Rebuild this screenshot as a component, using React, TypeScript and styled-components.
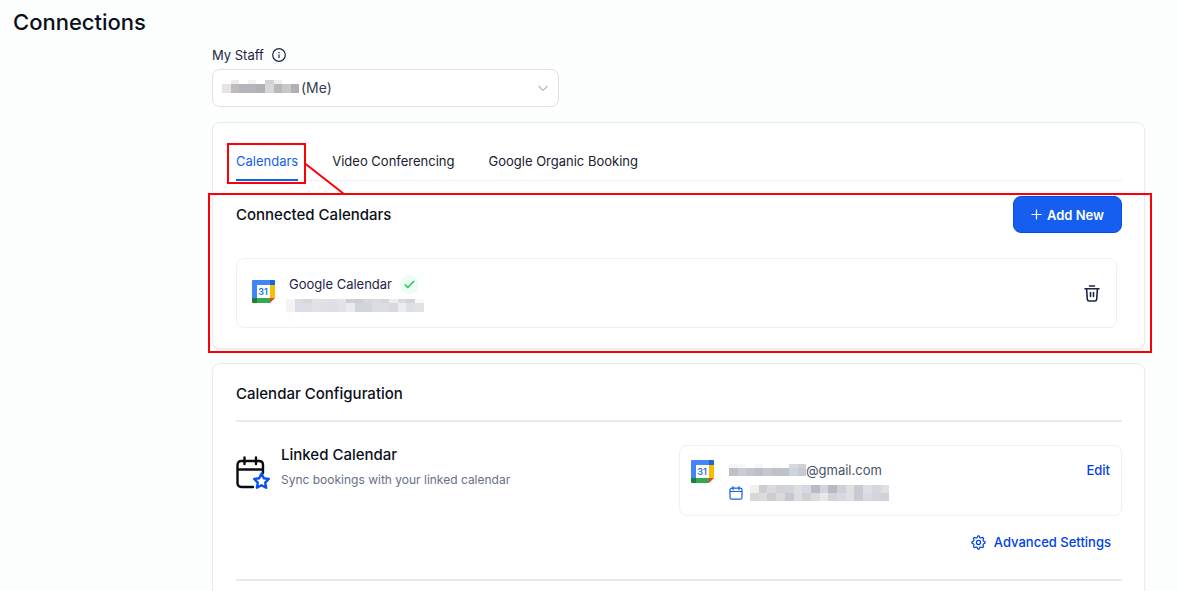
import React from "react";
import styled, { createGlobalStyle } from "styled-components";

const Global = createGlobalStyle`
  * { box-sizing: border-box; }
  body {
    margin: 0;
    background: #fcfdfd;
    color: #101828;
    font-family: Inter, "Liberation Sans", sans-serif;
    font-size: 14px;
    line-height: 20px;
  }
  h1, h2, h3, p { margin: 0; }
  svg { display: block; flex: none; }
`;

const Page = styled.div`
  overflow-x: hidden;
`;

const PageTitle = styled.h1`
  padding: 8px 13px 0;
  font-size: 22px;
  line-height: 28px;
  font-weight: 500;
  color: #0b0f1a;
`;

const Content = styled.main`
  margin: 8px 32px 0 212px;
  display: flex;
  flex-direction: column;
`;

const StaffLabel = styled.label`
  display: flex;
  align-items: center;
  gap: 8px;
  line-height: 22px;
  font-size: 13px;
  color: #1d2647;
`;

const SelectWrap = styled.div`
  position: relative;
  width: 100%;
  max-width: 347px;
  margin: 3px 0 15px;
`;

const Select = styled.select`
  appearance: none;
  display: block;
  width: 100%;
  height: 38px;
  padding: 0 40px 0 88px;
  border: 1px solid #dfe1e8;
  border-radius: 8px;
  background: #fff;
  color: #344054;
  font: inherit;
`;

const SelectMask = styled.span`
  position: absolute;
  left: 10px;
  top: 11px;
  pointer-events: none;
`;

const SelectChevron = styled.span`
  position: absolute;
  right: 10px;
  top: 13px;
  pointer-events: none;
  color: #b5b9c1;
`;

const Card = styled.section`
  position: relative;
  padding: 0 22px 0 23px;
  border: 1px solid #e9ebf1;
  border-radius: 8px;
  background: #fff;
  box-shadow: 0 1px 2px rgba(16, 24, 40, 0.06);
`;

const CalendarsCard = styled(Card)`
  padding-top: 24px;
  padding-bottom: 20px;
  margin-bottom: 14px;
`;

const Tabs = styled.div`
  display: flex;
  gap: 34px;
  border-bottom: 1px solid #eef0f6;
`;

const Tab = styled.button<{ $active?: boolean }>`
  height: 34px;
  margin-bottom: -1px;
  padding: 0 0 4px;
  border: 0;
  border-bottom: 2px solid ${(p) => (p.$active ? "#155eef" : "transparent")};
  background: none;
  color: ${(p) => (p.$active ? "#155eef" : "#1a2030")};
  font: inherit;
  font-size: 13px;
`;

const PanelHead = styled.div`
  display: flex;
  justify-content: space-between;
  align-items: center;
  margin-top: 15px;
`;

const Heading = styled.h2`
  font-size: 15px;
  line-height: 20px;
  font-weight: 500;
  color: #0b0f1a;
`;

const PrimaryButton = styled.button`
  display: flex;
  align-items: center;
  gap: 5px;
  height: 37px;
  padding: 0 17px;
  border: 1px solid #004eeb;
  border-radius: 8px;
  background: #155eef;
  color: #fff;
  font: inherit;
  font-size: 13px;
  font-weight: 600;
`;

const AccountRow = styled.div`
  display: flex;
  align-items: center;
  margin: 25px 5px 0 0;
  padding: 0 16px 0 15px;
  height: 70px;
  border: 1px solid #eff0f4;
  border-radius: 8px;
`;

const AccountLogo = styled.span`
  padding-bottom: 4px;
`;

const AccountInfo = styled.div`
  flex: 1;
  display: flex;
  flex-direction: column;
  gap: 5px;
  margin-left: 11px;
`;

const AccountName = styled.div`
  display: flex;
  align-items: center;
  gap: 8px;
  margin-left: 3px;
  font-size: 13px;
  color: #1d2647;
`;

const CheckBadge = styled.span`
  display: grid;
  place-items: center;
  width: 19px;
  height: 19px;
  border-radius: 50%;
  background: #ecfdf3;
`;

const IconButton = styled.button`
  padding: 0;
  border: 0;
  background: none;
  color: #1d2647;
`;

const ConfigCard = styled(Card)`
  padding-top: 20px;
  padding-bottom: 20px;
`;

const ConfigTitle = styled(Heading)`
  margin-bottom: 16px;
`;

const Divider = styled.hr`
  height: 2px;
  margin: 0;
  border: 0;
  background: #e9eaee;
`;

const ConfigRow = styled.div`
  display: flex;
  align-items: flex-start;
  margin: 23px 0 16px;
`;

const ConfigText = styled.div`
  flex: 1;
  display: flex;
  gap: 11px;
  align-items: flex-end;
`;

const Description = styled.p`
  margin-top: 5px;
  font-size: 12px;
  line-height: 20px;
  color: #667085;
`;

const LinkedBox = styled.div`
  display: flex;
  width: 50%;
  height: 71px;
  padding: 14px 11px;
  gap: 15px;
  border: 1px solid #eff0f4;
  border-radius: 8px;
`;

const LinkedInfo = styled.div`
  flex: 1;
  display: flex;
  flex-direction: column;
  gap: 5px;
`;

const Line = styled.div<{ $gap?: number }>`
  display: flex;
  align-items: center;
  gap: ${(p) => p.$gap ?? 0}px;
  font-size: 13px;
  color: #475467;
`;

const TextLink = styled.a`
  display: inline-flex;
  align-items: center;
  gap: 8px;
  height: 20px;
  color: #0040e8;
  font-size: 13px;
  font-weight: 500;
  text-decoration: none;
`;

const Actions = styled.div`
  display: flex;
  justify-content: flex-end;
  padding-right: 11px;
  margin-bottom: 27px;
`;

const PanelMarker = styled.div`
  position: absolute;
  inset: 70px -8px -5px -5px;
  border: 2px solid #fb0007;
  pointer-events: none;
`;

const TabMarker = styled.div`
  position: absolute;
  left: 14px;
  top: 20px;
  width: 79px;
  height: 41px;
  border: 2px solid #fb0007;
  pointer-events: none;
`;

const MarkerLine = styled.svg`
  position: absolute;
  left: 92px;
  top: 40px;
  pointer-events: none;
`;

interface MosaicProps {
  rows: string[][];
  cell: number;
  heights: number[];
  label: string;
}

function Mosaic({ rows, cell, heights, label }: MosaicProps) {
  const width = Math.round(Math.max(...rows.map((r) => r.length)) * cell);
  const height = heights.reduce((a, b) => a + b, 0);
  const tops = heights.map((_, i) => heights.slice(0, i).reduce((a, b) => a + b, 0));
  return (
    <svg width={width} height={height} role="img" aria-label={label} shapeRendering="crispEdges">
      {rows.map((row, r) =>
        row.map((c, i) => (
          <rect key={`${r}-${i}`} x={i * cell} y={tops[r]} width={cell + 0.5} height={heights[r]} fill={`#${c}`} />
        )),
      )}
    </svg>
  );
}

const nameMask = [
  "fff ececec fff f2f2f3 fff d3d1d3 eeeeef fff fff".split(" "),
  "e9e3e3 bdbdbf b5b4bb b3b5bb b0b1b5 d5d7da bcb6ba c6c8ca b3aeb1".split(" "),
];
const accountMask = [
  "f6f3f4 dcdce1 d6d6dc e3e3e7 e1e1e5 dfe0e6 e3e4e9 cfced5 cdced5 d6d7dd dadbe0 d6d5db eaecf0 d9dae0 d2d3d8 f6f8fd".split(" "),
  "f6f2f2 dbdde4 dddee4 e1e1e4 e0e0e4 dddfe5 e1e1e6 eaebed d2d4dc d3d5dd dadde4 dcdce2 d9d8de ebedef dcdfe5 e2e2e4".split(" "),
];
const emailMask = [
  "f5f6f8 f8f8f8 fff f7f7f7 fff fbfbfb fff d5d9e1 cdd0d7".split(" "),
  "bfc0c6 cbcdd4 c2c5cd bcbfc8 c5c7ce bfc1c8 c0c2c9 cdd3dc c7c9d0".split(" "),
];
const calendarMask = [
  "f2f0ef cdced1 dad9db d1d1d6 d0d4dc dededf d5d8df b9bbc2 d3d4d9 b6b9c1 cfd1d7 dedfdf c9cad1 dcdee3 d5d7de dedfe0".split(" "),
  "d8d7d8 dbdbde cfcdd1 d9d9dd c6c8cf dcdcdf cfcfd4 dbdbdf e8e8e9 d3d4da d8d9de dedfe0 c9cbd2 d8d9de d3d5dc d0d2d9".split(" "),
];

function GoogleCalendarIcon() {
  return (
    <svg width="23" height="23" viewBox="0 0 23 23" aria-hidden="true">
      <path d="M0 1a1 1 0 0 1 1-1h17v5H5v13H0z" fill="#4285f4" />
      <path d="M18 0h4a1 1 0 0 1 1 1v4h-5z" fill="#1967d2" />
      <path d="M18 5h5v13h-5z" fill="#fbbc04" />
      <path d="M5 18h13v5H5z" fill="#34a853" />
      <path d="M0 18h5v5H1a1 1 0 0 1-1-1z" fill="#188038" />
      <path d="M18 18h5l-5 5z" fill="#ea4335" />
      <path d="M5 5h13v13H5z" fill="#fff" />
      <text x="11" y="15" textAnchor="middle" fontFamily="Inter, sans-serif" fontSize="9" fontWeight="600" fill="#1a73e8">
        31
      </text>
    </svg>
  );
}

function CalendarStarIcon() {
  return (
    <svg width="34" height="34" viewBox="0 0 34 34" fill="none" strokeLinecap="round" strokeLinejoin="round" aria-hidden="true">
      <path
        d="M17 31H5.500Q1.500 31 1.500 27V9Q1.500 5 5.500 5H23Q27 5 27 9V17M1.500 13.500H27M8.500 1.500V8M20 1.500V8"
        stroke="#090b10"
        strokeWidth="2.400"
      />
      <path
        d="m25.500 17.500 2.300 4.800 5 .7-3.600 3.600.9 5.200-4.600-2.500-4.600 2.500.9-5.200-3.600-3.600 5-.7z"
        stroke="#0b50f2"
        strokeWidth="2.400"
        fill="#fff"
      />
    </svg>
  );
}

function GearIcon() {
  const points = Array.from({ length: 32 }, (_, i) => {
    const a = ((i - 0.5) * Math.PI) / 16;
    const r = i % 4 < 2 ? 7 : 5.4;
    return `${8 + r * Math.sin(a)},${8 - r * Math.cos(a)}`;
  }).join(" ");
  return (
    <svg width="15" height="15" viewBox="0 0 16 16" fill="none" stroke="currentColor" strokeWidth="1.300" strokeLinejoin="round" aria-hidden="true">
      <polygon points={points} />
      <circle cx="8" cy="8" r="2.200" />
    </svg>
  );
}

export default function App() {
  return (
    <Page>
      <Global />
      <PageTitle>Connections</PageTitle>
      <Content>
        <StaffLabel htmlFor="staff">
          My Staff
          <svg width="14" height="14" viewBox="0 0 14 14" fill="none" stroke="currentColor" strokeWidth="1.200" aria-hidden="true">
            <circle cx="7" cy="7" r="6.300" />
            <path d="M7 6.500V10M7 4V5.200" />
          </svg>
        </StaffLabel>
        <SelectWrap>
          <Select id="staff">
            <option>(Me)</option>
          </Select>
          <SelectMask>
            <Mosaic rows={nameMask} cell={8.6} heights={[4, 9]} label="Hidden name" />
          </SelectMask>
          <SelectChevron>
            <svg width="12" height="12" viewBox="0 0 12 12" fill="none" stroke="currentColor" strokeWidth="1.200" aria-hidden="true">
              <path d="m1.500 4 4.500 4.500L10.500 4" />
            </svg>
          </SelectChevron>
        </SelectWrap>

        <CalendarsCard>
          <Tabs role="tablist">
            <Tab role="tab" aria-selected="true" $active>
              Calendars
            </Tab>
            <Tab role="tab" aria-selected="false">
              Video Conferencing
            </Tab>
            <Tab role="tab" aria-selected="false">
              Google Organic Booking
            </Tab>
          </Tabs>
          <PanelHead>
            <Heading>Connected Calendars</Heading>
            <PrimaryButton>
              <svg width="11" height="11" viewBox="0 0 11 11" stroke="currentColor" strokeWidth="1.200" aria-hidden="true">
                <path d="M5.500 .5v10M.5 5.500h10" />
              </svg>
              Add New
            </PrimaryButton>
          </PanelHead>
          <AccountRow>
            <AccountLogo>
              <GoogleCalendarIcon />
            </AccountLogo>
            <AccountInfo>
              <AccountName>
                Google Calendar
                <CheckBadge>
                  <svg width="11" height="9" viewBox="0 0 11 9" fill="none" stroke="#20c05c" strokeWidth="1.400" aria-hidden="true">
                    <path d="m.8 4.500 3 3L10.200 1" />
                  </svg>
                </CheckBadge>
              </AccountName>
              <Mosaic rows={accountMask} cell={8.6} heights={[4, 9]} label="Hidden account" />
            </AccountInfo>
            <IconButton aria-label="Delete calendar">
              <svg width="16" height="17" viewBox="0 0 16 17" fill="none" stroke="currentColor" strokeWidth="1.600" strokeLinecap="round" aria-hidden="true">
                <path d="M5.500 1h5M1 3.700h14M2.600 4l.7 10.200Q3.500 16 5 16h6q1.500 0 1.700-1.800L13.400 4M6.500 7.500v4M9.500 7.500v4" />
              </svg>
            </IconButton>
          </AccountRow>
          <PanelMarker />
          <TabMarker />
          <MarkerLine width="40" height="32" viewBox="0 0 40 32" aria-hidden="true">
            <path d="M0 0.500 39 31" stroke="#fb0007" strokeWidth="2" />
          </MarkerLine>
        </CalendarsCard>

        <ConfigCard>
          <ConfigTitle>Calendar Configuration</ConfigTitle>
          <Divider />
          <ConfigRow>
            <ConfigText>
              <CalendarStarIcon />
              <div>
                <Heading as="h3">Linked Calendar</Heading>
                <Description>Sync bookings with your linked calendar</Description>
              </div>
            </ConfigText>
            <LinkedBox>
              <GoogleCalendarIcon />
              <LinkedInfo>
                <Line>
                  <Mosaic rows={emailMask} cell={8.6} heights={[4, 8]} label="Hidden address" />
                  @gmail.com
                </Line>
                <Line $gap={7}>
                  <svg width="14" height="14" viewBox="0 0 14 14" fill="none" stroke="#155eef" strokeWidth="1.200" strokeLinecap="round" aria-hidden="true">
                    <rect x="1" y="2.200" width="12" height="11" rx="1.800" />
                    <path d="M1 5.500h12M4 .7v3M10 .7v3" />
                  </svg>
                  <Mosaic rows={calendarMask} cell={8.7} heights={[8, 8]} label="Hidden calendar" />
                </Line>
              </LinkedInfo>
              <TextLink href="#edit">Edit</TextLink>
            </LinkedBox>
          </ConfigRow>
          <Actions>
            <TextLink href="#advanced">
              <GearIcon />
              Advanced Settings
            </TextLink>
          </Actions>
          <Divider />
        </ConfigCard>
      </Content>
    </Page>
  );
}
